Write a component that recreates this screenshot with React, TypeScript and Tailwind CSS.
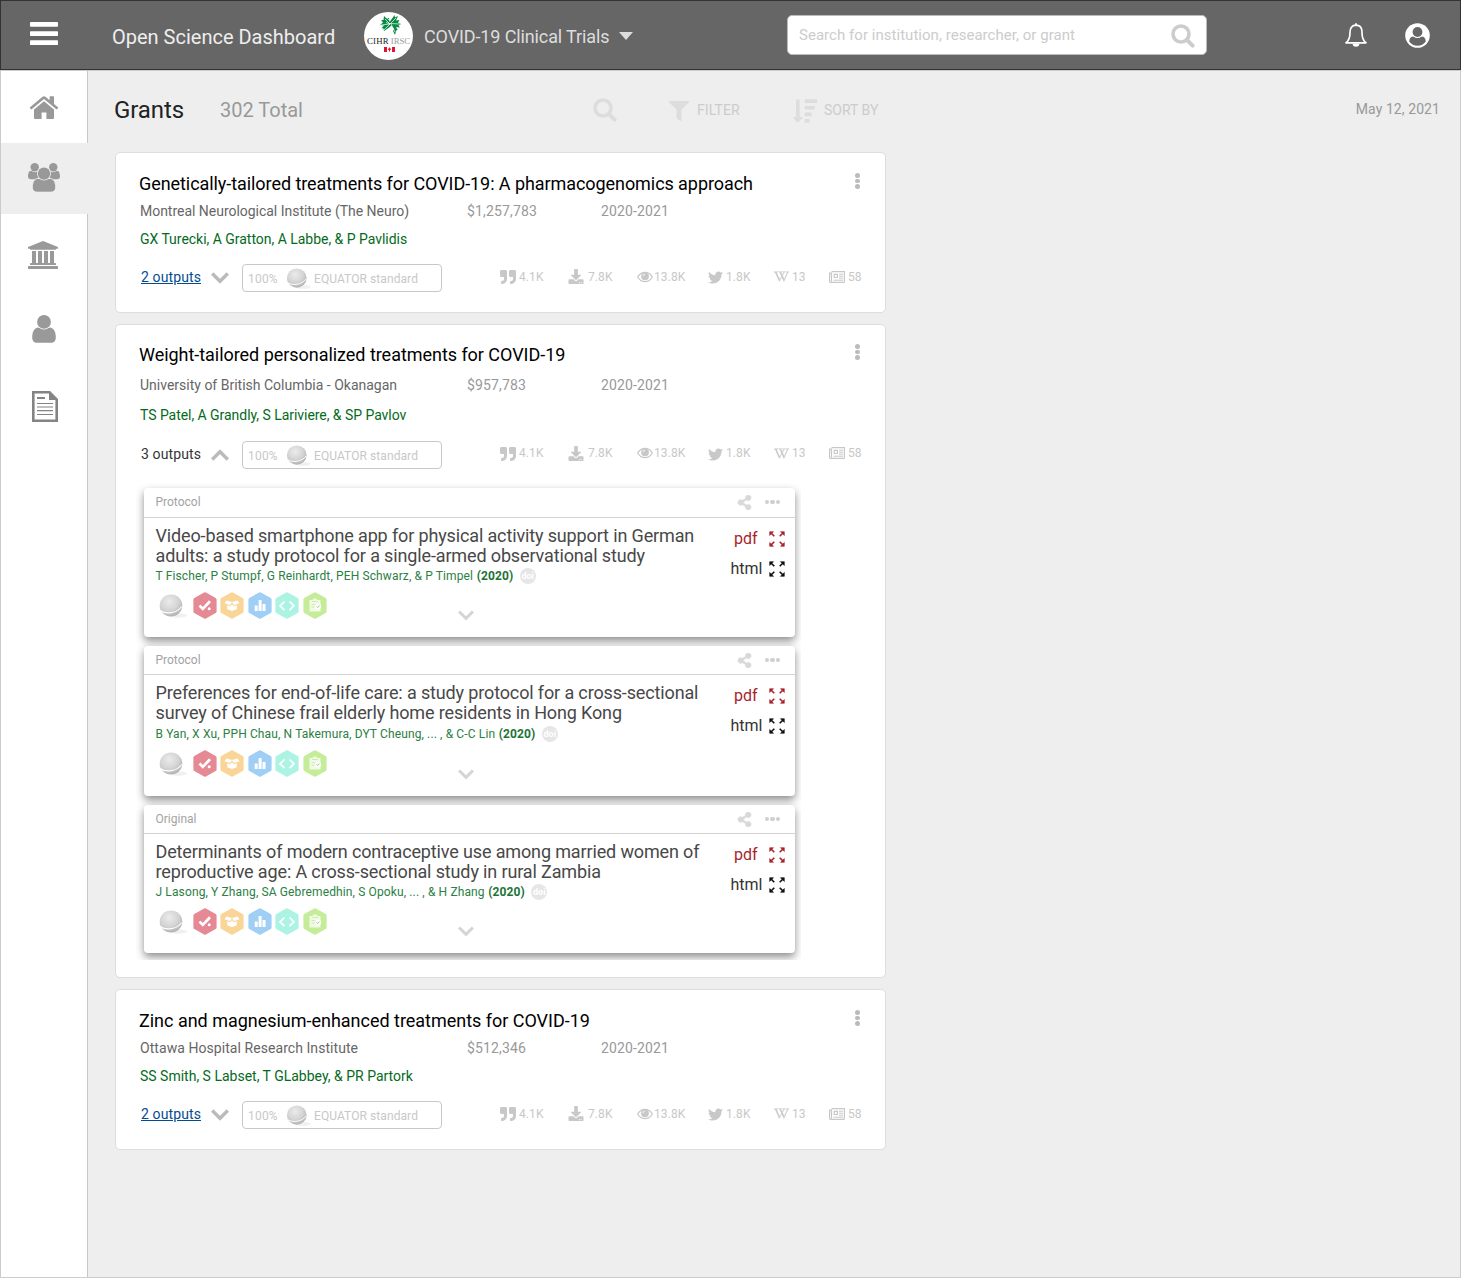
import React from 'react';
import { FaFilter, FaQuoteRight, FaDownload, FaTwitter, FaWikipediaW, FaShareAlt } from 'react-icons/fa';

type IconProps = { className?: string };

function SearchIcon({ className = '' }: IconProps) {
  return (
    <svg className={className} viewBox="0 0 24 24" fill="none" stroke="currentColor">
      <circle cx="10" cy="10" r="8" strokeWidth="3.6" />
      <path d="M16 16l5.6 5.6" strokeWidth="4" strokeLinecap="round" />
    </svg>
  );
}

function SortIcon({ className = '' }: IconProps) {
  return (
    <svg className={className} viewBox="0 0 24 24" fill="currentColor">
      <path d="M3 .5h3.600v17.500h2.600c.5 0 .6.4.3.700L5.200 23.300c-.3.3-.6.3-.9 0L.2 18.700c-.3-.3-.2-.7.3-.7H3z" />
      <path d="M11.700.3H24V4H11.700zM11.700 6.900h10v3.700h-10zM11.700 13.500h7v3.700h-7zM11.700 20.100h4.700v3.700h-4.700z" />
    </svg>
  );
}

function MenuIcon() {
  return (
    <svg className="h-[23px] w-7 text-white" viewBox="0 0 28 23" fill="currentColor">
      <rect width="28" height="4.8" rx="0.8" />
      <rect y="9.2" width="28" height="4.8" rx="0.8" />
      <rect y="18.3" width="28" height="4.8" rx="0.8" />
    </svg>
  );
}

function HomeIcon() {
  return (
    <svg className="h-6 w-[30px]" viewBox="0 0 30 24" fill="currentColor">
      <path d="M15 5.2L5 13.4V22a1 1 0 0 0 1 1h6.6v-6.6h4.8V23H24a1 1 0 0 0 1-1v-8.600z" />
      <path d="M29 11.2L25 7.900V.9a.6.6 0 0 0-.6-.6h-3.200a.6.6 0 0 0-.6.6v3.300L16.500.8a2.400 2.400 0 0 0-3 0L1 11.200c-.3.2-.3.5-.1.800l1 1.200c.2.2.5.2.8.1L15 3l12.300 10.300c.3.1.6.1.8-.1l1-1.200c.2-.3.2-.6-.1-.8z" />
    </svg>
  );
}

function GroupIcon() {
  return (
    <svg className="h-[29px] w-8" viewBox="0 0 32 29" fill="currentColor">
      <circle cx="6.700" cy="4.200" r="4.200" />
      <circle cx="25.300" cy="4.200" r="4.200" />
      <path d="M3 7.800c2 1.600 5 1.800 7 .6-.5 3 0 5.400 1 7.900H3C1 16.300 0 15 0 13.200 0 11.300.7 7.800 3 7.800zM29 7.800c-2 1.600-5 1.800-7 .6.5 3 0 5.400-1 7.900h8c2 0 3-1.300 3-3.100 0-1.900-.7-5.400-3-5.400z" />
      <path d="M9.800 15.500h12.400c3.800.2 5.500 4.300 5.500 8.800 0 3-1.800 4.900-4.800 4.900H9.100c-3 0-4.800-1.900-4.800-4.900 0-4.500 1.700-8.600 5.500-8.800z" stroke="#eee" strokeWidth="1" />
      <circle cx="16" cy="10.600" r="7" fill="#eee" />
      <circle cx="16" cy="10.600" r="6.200" />
    </svg>
  );
}

function BankIcon() {
  return (
    <svg className="h-7 w-[30px]" viewBox="0 0 30 28" fill="currentColor">
      <path d="M15 0l15 6v1.800H28c0 .6-.4 1-1 1H3c-.6 0-1-.4-1-1H0V6z" />
      <path d="M4 10h4v12h2V10h4v12h2V10h4v12h2V10h4v12h.900c.6 0 1.100.4 1.100.9v1.100H2v-1.100c0-.5.5-.9 1.100-.9H4z" />
      <path d="M1 25h28c.6 0 1 .4 1 1v2H0v-2c0-.6.4-1 1-1z" />
    </svg>
  );
}

function PersonIcon() {
  return (
    <svg className="h-7 w-6" viewBox="0 0 24 28" fill="currentColor">
      <path d="M6.500 12.500h11c4.700 0 6.300 5.300 6.300 10 0 3.300-1.900 5.300-4.800 5.300H5c-2.900 0-4.800-2-4.800-5.300 0-4.700 1.600-10 6.300-10z" />
      <circle cx="12" cy="6.900" r="7.500" fill="white" />
      <circle cx="12" cy="6.900" r="6.900" />
    </svg>
  );
}

function DocIcon() {
  return (
    <svg className="h-[31px] w-[26px] text-[#848484]" viewBox="0 0 26 31" fill="none" stroke="currentColor">
      <path d="M1.300 1.300H17.500L24.700 8.500V29.700H1.300z" strokeWidth="2.600" />
      <path d="M17 1v8h8z" fill="currentColor" stroke="none" />
      <path d="M5 7h8" strokeWidth="2" />
      <path d="M5 12.500h16M5 16h16M5 19.700h16M5 23.500h16" strokeWidth="1.200" />
    </svg>
  );
}

function BellIcon() {
  return (
    <svg className="h-6 w-6" viewBox="0 0 24 24" fill="none" stroke="white">
      <path d="M12 2.200c4.200 0 6 3 6 7.300 0 5 1.400 8.400 4 10.300H2C4.600 17.900 6 14.500 6 9.500c0-4.300 1.800-7.300 6-7.300z" strokeWidth="1.700" strokeLinejoin="round" />
      <path d="M12 .9v1.500" strokeWidth="1.800" strokeLinecap="round" />
      <path d="M8.600 20.600a3.400 3.200 0 0 0 6.800 0z" fill="white" stroke="none" />
    </svg>
  );
}

function AccountIcon() {
  return (
    <svg className="h-[25px] w-[25px]" viewBox="0 0 25 25">
      <circle cx="12.500" cy="12.500" r="12.300" fill="white" />
      <path d="M4.200 18.500c.2-3.200 1.700-5 4.200-5 2.500 1.900 5.700 1.900 8.200 0 2.500 0 4 1.800 4.200 5a10.200 10.200 0 0 1-16.600 0z" fill="#666" />
      <circle cx="12.500" cy="9.200" r="5.900" fill="white" />
      <circle cx="12.500" cy="9" r="4.900" fill="#666" />
    </svg>
  );
}

function AgencyLogo() {
  return (
    <div className="mt-[2px] flex h-12 w-[49px] flex-col items-center rounded-[50%] bg-white pt-[3px]">
      <svg className="ml-1 h-[21px] w-[22px]" viewBox="0 0 22 21" fill="#078a43">
        <path d="M9.500 7L9 3 6.500 3.500 4 1l-.5 4L1 5l2 2.500L0 10l4 .5L1.500 13l2 .5L4 16l4.500-3 3-2.500L14 14l-1 2 2 4 1-4 1.500-1.500L16 12l4 .5-1.500-2L21 9l-3-1.500L19.500 5l-3.500.5L18 1l-3 1.500L14.500 0 12.500 3z" />
        <path d="M10 9L5 4m5 5l-9 1m9-1l-6 6m6-6l6-6m-6 5.500l10 .5M11 9l4 8M7 3l3 3M6 7.500l4 1.500" stroke="white" strokeWidth=".7" />
      </svg>
      <div className="-mt-px flex h-3 w-[43px] justify-between font-['Liberation_Serif'] text-[8.800px] leading-[12px]">
        <span className="tracking-[0.2px] text-[#222]">CIHR</span>
        <span className="tracking-[-0.1px] text-[#999]">IRSC</span>
      </div>
      <svg className="ml-[2px] h-[5px] w-[11px]" viewBox="0 0 11 5">
        <path d="M0 0h3v5H0zM8 0h3v5H8zM5.500.3l1.700 2.200-1.200.5v1.500H5V3l-1.200-.5z" fill="#e8112d" />
      </svg>
    </div>
  );
}

function Chevron({ className = '', up = false }: IconProps & { up?: boolean }) {
  return (
    <svg className={className} viewBox="0 0 18 12" fill="none" stroke="currentColor" strokeWidth="3.400">
      <path d={up ? 'M1.200 10.500L9 2.700l7.800 7.800' : 'M1.200 1.500L9 9.300l7.800-7.800'} />
    </svg>
  );
}

function Sphere({ className = '' }: IconProps) {
  return (
    <svg className={className} viewBox="0 0 28 24">
      <defs>
        <radialGradient id="ball" cx="42%" cy="32%" r="68%">
          <stop offset="0" stopColor="#ebebeb" />
          <stop offset=".6" stopColor="#d4d4d4" />
          <stop offset="1" stopColor="#b4b4b4" />
        </radialGradient>
      </defs>
      <ellipse cx="19" cy="21.500" rx="9" ry="2.200" fill="#f0f0f0" />
      <ellipse cx="12" cy="11.500" rx="11.300" ry="11" fill="url(#ball)" />
      <path d="M1.500 16.500c5 4 16.500 3 21.200-4" fill="none" stroke="white" strokeWidth="1.100" />
    </svg>
  );
}

function EyeIcon() {
  return (
    <svg className="h-3 w-4" viewBox="0 0 16 12" fill="none" stroke="currentColor">
      <path d="M.7 6C4.200-.2 11.800-.2 15.300 6 11.800 12.200 4.200 12.200.7 6z" strokeWidth="1.300" />
      <circle cx="8" cy="5.300" r="3.900" fill="currentColor" stroke="none" />
      <path d="M5.900 5.300A2.100 2.100 0 0 1 8 3.200" stroke="white" strokeWidth=".8" />
    </svg>
  );
}

function NewsIcon() {
  return (
    <svg className="h-3 w-4" viewBox="0 0 16 12" fill="none" stroke="currentColor">
      <path d="M2.500.6h12.900v9.900c0 .6-.4.900-.9.9H1.600c-.6 0-1-.4-1-1V2.200h1.900v8.200" strokeWidth="1.200" />
      <path d="M5.200 3.300h3.200v3.200H5.200z" strokeWidth="1.200" />
      <path d="M10 3.200h4M10 5.200h4M10 7.200h4M4.500 9.200H14" strokeWidth="1" />
    </svg>
  );
}

function ExpandIcon() {
  return (
    <svg className="h-4 w-4" viewBox="0 0 16 16" fill="currentColor" stroke="currentColor">
      <path d="M.7.700h3.800L.7 4.500zM15.300.700v3.800l-3.800-3.800zM.7 15.300v-3.800l3.800 3.800zM15.300 15.300h-3.800l3.800-3.800z" strokeWidth=".6" />
      <path d="M2 2l3.300 3.300M14 2l-3.300 3.300M2 14l3.300-3.300M14 14l-3.300-3.300" strokeWidth="1.600" />
    </svg>
  );
}

const badges: { color: string; glyph: React.ReactNode }[] = [
  {
    color: '#e58a95',
    glyph: (
      <g fill="none" stroke="white">
        <path d="M6.500 13.500l3.300 3.400L17 9.300" strokeWidth="2.700" />
        <circle cx="16.200" cy="16.700" r="1.500" fill="white" stroke="none" />
      </g>
    ),
  },
  {
    color: '#fad598',
    glyph: (
      <g fill="white">
        <path d="M6.500 8.500L12 10l-2 3-5.500-1.700zM17.500 8.500L12 10l2 3 5.500-1.700z" />
        <path d="M7.200 13.300l3.200.900 1.600-2 1.600 2 3.200-.9v4L12 19l-4.800-1.700z" />
      </g>
    ),
  },
  { color: '#9fcff5', glyph: <path d="M6.700 13.500h3V19h-3zM10.600 8h3v11h-3zM14.500 12h3v7h-3z" fill="white" /> },
  { color: '#adf3e3', glyph: <path d="M9.500 9.500L5 13.800l4.500 4.300M14.500 9.500l4.500 4.300-4.500 4.300" fill="none" stroke="white" strokeWidth="1.700" /> },
  {
    color: '#c5ec99',
    glyph: (
      <g>
        <path d="M6.500 8h3l1-1.500h3l1 1.500h3v11.500h-11z" fill="white" fillOpacity=".75" />
        <path d="M9 9.500h6M8.500 12.500h4M8.500 15h3" stroke="#c5ec99" strokeWidth=".8" />
        <circle cx="15" cy="14.500" r="3" fill="white" />
        <path d="M13.700 14.500l1 1 1.700-2" fill="none" stroke="#8cb065" strokeWidth=".8" />
      </g>
    ),
  },
];

function HexBadge({ color, children }: { color: string; children: React.ReactNode }) {
  return (
    <svg className="h-[27px] w-6" viewBox="0 0 24 27">
      <path d="M12 2l9.800 5.600v11.800L12 25 2.200 19.400V7.600z" fill={color} stroke={color} strokeWidth="3.600" strokeLinejoin="round" />
      {children}
    </svg>
  );
}

const stats = [
  { icon: <FaQuoteRight className="mt-px h-4 w-4" />, value: '4.1K', width: 'w-[68px]', gap: 'gap-[3px]' },
  { icon: <FaDownload className="h-[15px] w-4" />, value: '7.8K', width: 'w-[69px]', gap: 'gap-1' },
  { icon: <EyeIcon />, value: '13.8K', width: 'w-[71px]', gap: 'gap-[1px]' },
  { icon: <FaTwitter className="mt-[2px] h-[15px] w-[15px]" />, value: '1.8K', width: 'w-[66px]', gap: 'gap-[3px]' },
  { icon: <FaWikipediaW className="h-[15px] w-[15px] stroke-current stroke-[16]" />, value: '13', width: 'w-[55px]', gap: 'gap-[3px]' },
  { icon: <NewsIcon />, value: '58', width: 'w-[36px]', gap: 'gap-[3px]' },
];

type Paper = {
  kind: string;
  title: [string, string];
  authors: string;
  card: string;
  header: string;
  body: string;
  byline: string;
  chevron: string;
};

function PaperCard({ p }: { p: Paper }) {
  return (
    <article className={`w-[651px] shrink-0 rounded-[4px] bg-white shadow-[0_4px_9px_rgba(0,0,0,0.45)] ${p.card}`}>
      <header className={`flex items-center border-b border-[#d2d2d2] pl-[11.500px] text-[12px] text-[#a3a3a3] ${p.header}`}>
        <span className="flex-1">{p.kind}</span>
        <FaShareAlt className="mt-px h-[15px] w-[15px] stroke-current stroke-[20] text-[#d9d9d9]" />
        <span className="mr-[15px] ml-[12.500px] flex gap-[1px]">
          <i className="h-[4.500px] w-[4.500px] rounded-full bg-[#cfcfcf]" />
          <i className="h-[4.500px] w-[4.500px] rounded-full bg-[#cfcfcf]" />
          <i className="h-[4.500px] w-[4.500px] rounded-full bg-[#cfcfcf]" />
        </span>
      </header>
      <div className={`flex justify-between pr-[10.500px] pl-[11.500px] ${p.body}`}>
        <div>
          <h3 className="text-[18px] leading-5 tracking-[-0.138px] whitespace-nowrap text-[#484848]">
            {p.title[0]}
            <br />
            {p.title[1]}
          </h3>
          <div className={`flex h-5 items-center text-[12px] whitespace-nowrap text-[#2b8043] ${p.byline}`}>
            <span className="tracking-[0.128px]">{p.authors}</span>
            <b className="ml-[3.500px] font-bold tracking-[0.1px] text-[#1d7436]">(2020)</b>
            <span className="ml-[6.500px] flex h-4 w-4 items-center justify-center rounded-full bg-[#e6e6e6] text-[9px] leading-none font-bold text-white">doi</span>
          </div>
        </div>
        <div className="-mt-[2px] flex flex-col text-[16px]">
          <div className="flex h-[30px] items-center justify-end gap-[11px] text-[#a8242b]">
            pdf <ExpandIcon />
          </div>
          <div className="flex h-[30px] items-center justify-end gap-[6px] text-[#333]">
            html <span className="text-[#111]"><ExpandIcon /></span>
          </div>
        </div>
      </div>
      <div className="flex items-start pl-[14.500px]">
        <Sphere className="mt-[2px] h-6 w-7" />
        <div className="ml-[6px] flex gap-[3.500px]">
          {badges.map((b) => (
            <HexBadge key={b.color} color={b.color}>{b.glyph}</HexBadge>
          ))}
        </div>
        <Chevron className={`ml-[131px] h-[11px] w-4 text-[#d5d5d5] ${p.chevron}`} />
      </div>
    </article>
  );
}

const papers: Paper[] = [
  {
    kind: 'Protocol',
    title: ['Video-based smartphone app for physical activity support in German', 'adults: a study protocol for a single-armed observational study'],
    authors: 'T Fischer, P Stumpf, G Reinhardt, PEH Schwarz, & P Timpel',
    card: 'h-[149px]', header: 'h-[30px] pb-px', body: 'h-[74px] pt-2', byline: '', chevron: 'mt-[18px]',
  },
  {
    kind: 'Protocol',
    title: ['Preferences for end-of-life care: a study protocol for a cross-sectional', 'survey of Chinese frail elderly home residents in Hong Kong'],
    authors: 'B Yan, X Xu, PPH Chau, N Takemura, DYT Cheung, ... , & C-C Lin',
    card: 'h-[150px]', header: 'h-[29px]', body: 'h-[75px] pt-2', byline: 'mt-px', chevron: 'mt-[19px]',
  },
  {
    kind: 'Original',
    title: ['Determinants of modern contraceptive use among married women of', 'reproductive age: A cross-sectional study in rural Zambia'],
    authors: 'J Lasong, Y Zhang, SA Gebremedhin, S Opoku, ... , & H Zhang',
    card: 'h-[148px]', header: 'h-[29px]', body: 'h-[74px] pt-2', byline: '', chevron: 'mt-[18px]',
  },
];

type Grant = {
  title: string;
  titleTracking: string;
  org: string;
  orgTracking: string;
  amount: string;
  people: string;
  peopleTracking: string;
  outputs: string;
};

function GrantCard({ g, open = false, children }: { g: Grant; open?: boolean; children?: React.ReactNode }) {
  return (
    <section className={`w-[771px] rounded-[5px] border border-[#ddd] bg-white ${open ? 'h-[654px] pt-[18px]' : 'h-[161px] pt-[19px]'}`}>
      <div className="flex h-6 justify-between pr-[25px] pl-[23px]">
        <h2 className={`text-[18px] leading-6 whitespace-nowrap text-black ${g.titleTracking}`}>{g.title}</h2>
        <div className="mt-px flex flex-col gap-[1px]">
          <i className="h-[4.500px] w-[5px] rounded-full bg-[#bbb]" />
          <i className="h-[4.500px] w-[5px] rounded-full bg-[#bbb]" />
          <i className="h-[4.500px] w-[5px] rounded-full bg-[#bbb]" />
        </div>
      </div>
      <div className={`flex pl-6 text-[14px] text-[#999] ${open ? 'mt-[3px] leading-[30px]' : 'mt-[1px] leading-7'}`}>
        <span className={`w-[327px] text-[#666] ${g.orgTracking}`}>{g.org}</span>
        <span className="w-[134px] tracking-[0.150px]">{g.amount}</span>
        <span className="tracking-[0.130px]">2020-2021</span>
      </div>
      <div className={`pl-6 text-[14px] text-[#046a1c] ${g.peopleTracking} ${open ? 'leading-[30px]' : 'leading-7'}`}>{g.people}</div>
      <div className="mt-[11px] flex h-7 items-center pl-[25px]">
        <a className={`mb-[2px] w-[70px] text-[14px] tracking-[0.110px] ${open ? 'text-[#333]' : 'text-[#034c91] underline'}`}>{g.outputs}</a>
        <Chevron up={open} className="h-3 w-[18px] text-[#bbb]" />
        <div className="ml-[13px] flex h-7 w-[200px] items-center rounded-[4px] border border-[#c8c8c8] pl-[5px] text-[12px] text-[#c8c8c8]">
          <span className="mt-[2px] w-[37.500px] tracking-[0.200px]">100%</span>
          <Sphere className="h-[21px] w-[25px]" />
          <span className="mt-[2px] ml-[3.500px] tracking-[0.080px]">EQUATOR standard</span>
        </div>
        <div className={`ml-[58px] flex text-[12px] text-[#c8c8c8] ${open ? 'mb-1' : 'mb-[3px]'}`}>
          {stats.map((s) => (
            <span key={s.value} className={`flex shrink-0 items-center ${s.width} ${s.gap}`}>
              {s.icon}
              <span className="tracking-[0.080px]">{s.value}</span>
            </span>
          ))}
        </div>
      </div>
      {children}
    </section>
  );
}

export default function App() {
  return (
    <div className="flex h-[1278px] w-[1461px] flex-col overflow-hidden bg-[#eee] font-['Roboto',sans-serif]">
      <header className="flex h-[70px] shrink-0 items-center border border-[#333] bg-[#666] pl-[29px]">
        <div className="mb-[3px]"><MenuIcon /></div>
        <h1 className="mt-[4px] ml-[54px] w-[252px] text-[20px] text-[#eee]">Open Science Dashboard</h1>
        <AgencyLogo />
        <span className="mt-[3px] ml-[11px] w-[195px] text-[18px] tracking-[-0.120px] text-[#ddd]">COVID-19 Clinical Trials</span>
        <svg className="mt-[2px] h-2 w-[14px]" viewBox="0 0 14 8" fill="#ddd"><path d="M0 0h14L7 8z" /></svg>
        <div className="ml-[154px] flex h-10 w-[420px] items-center justify-between rounded-[5px] border border-[#bbb] bg-white pr-[11px] pl-[11px] text-[#ccc]">
          <span className="text-[15px] tracking-[0.035px]">Search for institution, researcher, or grant</span>
          <SearchIcon className="mt-[2px] h-6 w-6" />
        </div>
        <div className="ml-[137px]"><BellIcon /></div>
        <div className="mt-px ml-[37px]"><AccountIcon /></div>
      </header>
      <div className="flex flex-1 border border-[#ccc]">
        <nav className="flex w-[87px] shrink-0 flex-col bg-white text-[#999]">
          <a className="flex h-[72px] justify-center border-r border-[#c8c8c8] pt-[25px]"><HomeIcon /></a>
          <a className="flex h-[71px] justify-center bg-[#eee] pt-5 pr-px"><GroupIcon /></a>
          <div className="flex flex-1 flex-col items-center border-r border-[#c8c8c8]">
            <div className="mt-[27px] mr-[2px]"><BankIcon /></div>
            <div className="mt-[46px]"><PersonIcon /></div>
            <div className="mt-[48px] ml-px"><DocIcon /></div>
          </div>
        </nav>
        <main className="flex-1 pl-[27px]">
          <div className="flex h-[81px] items-center pb-[3px]">
            <h2 className="-ml-px w-[106px] text-[24px] tracking-[-0.100px] text-[#222]">Grants</h2>
            <span className="w-[373px] text-[20px] text-[#999]">302 Total</span>
            <SearchIcon className="h-6 w-6 text-[#ddd]" />
            <FaFilter className="mt-px ml-[52px] h-5 w-5 text-[#ddd]" />
            <span className="mt-px ml-2 w-[96px] text-[14px] tracking-[0.100px] text-[#ccc]">FILTER</span>
            <SortIcon className="mt-px h-6 w-6 text-[#ddd]" />
            <span className="mt-px ml-[7px] flex-1 text-[14px] text-[#ccc]">SORT BY</span>
            <span className="mr-[20px] mb-[1px] text-[14px] tracking-[0.080px] text-[#999]">May 12, 2021</span>
          </div>
          <div className="flex flex-col gap-[11px]">
            <GrantCard g={{ title: 'Genetically-tailored treatments for COVID-19: A pharmacogenomics approach', titleTracking: 'tracking-[-0.068px]', org: 'Montreal Neurological Institute (The Neuro)', orgTracking: 'tracking-[-0.025px]', amount: '$1,257,783', people: 'GX Turecki, A Gratton, A Labbe, & P Pavlidis', peopleTracking: 'tracking-[-0.025px]', outputs: '2 outputs' }} />
            <GrantCard open g={{ title: 'Weight-tailored personalized treatments for COVID-19', titleTracking: 'tracking-[-0.040px]', org: 'University of British Columbia - Okanagan', orgTracking: 'tracking-normal', amount: '$957,783', people: 'TS Patel, A Grandly, S Lariviere, & SP Pavlov', peopleTracking: 'tracking-[-0.045px]', outputs: '3 outputs' }}>
              <div className="mt-[14px] ml-[20px] flex h-[477px] w-[665px] flex-col gap-[9px] overflow-hidden pt-[5px] pl-2">
                {papers.map((p) => <PaperCard key={p.title[0]} p={p} />)}
              </div>
            </GrantCard>
            <GrantCard g={{ title: 'Zinc and magnesium-enhanced treatments for COVID-19', titleTracking: 'tracking-[-0.020px]', org: 'Ottawa Hospital Research Institute', orgTracking: 'tracking-[0.060px]', amount: '$512,346', people: 'SS Smith, S Labset, T GLabbey, & PR Partork', peopleTracking: 'tracking-normal', outputs: '2 outputs' }} />
          </div>
        </main>
      </div>
    </div>
  );
}
